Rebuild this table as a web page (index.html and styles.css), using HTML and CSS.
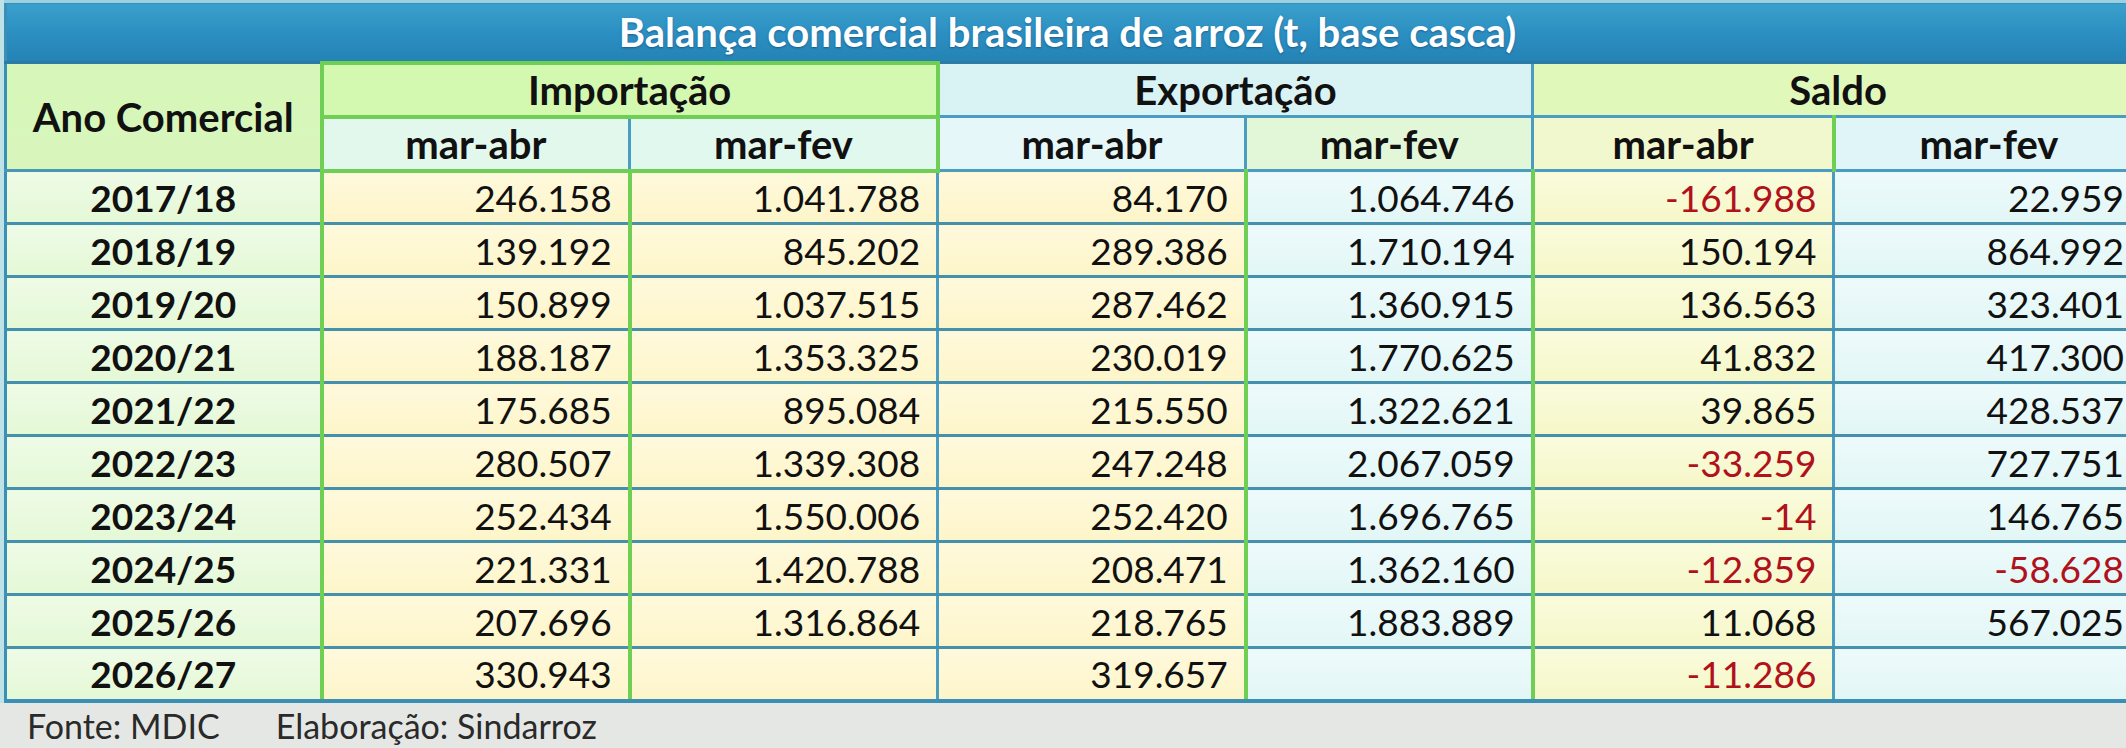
FILE: index.html
```html
<!DOCTYPE html>
<html lang="pt-BR">
<head>
<meta charset="utf-8">
<title>Balança comercial brasileira de arroz</title>
<link rel="stylesheet" href="styles.css">
</head>
<body>
<div class="frame">
<table class="grid">
  <colgroup>
    <col class="c-ano"><col class="c-n"><col class="c-n"><col class="c-n"><col class="c-n2"><col class="c-n3"><col class="c-n">
  </colgroup>
  <thead>
    <tr class="title-row"><th colspan="7" class="title">Balança comercial brasileira de arroz (t, base casca)</th></tr>
    <tr class="h1">
      <th rowspan="2" class="h-ano">Ano Comercial</th>
      <th colspan="2" class="h-imp">Importação</th>
      <th colspan="2" class="h-exp">Exportação</th>
      <th colspan="2" class="h-sal">Saldo</th>
    </tr>
    <tr class="h2">
      <th class="s-imp1">mar-abr</th>
      <th class="s-imp2">mar-fev</th>
      <th class="s-exp1">mar-abr</th>
      <th class="s-exp2">mar-fev</th>
      <th class="s-sal1">mar-abr</th>
      <th class="s-sal2">mar-fev</th>
    </tr>
  </thead>
  <tbody>
    <tr><td class="ano">2017/18</td><td class="y b-g">246.158</td><td class="y b-b">1.041.788</td><td class="y b-g">84.170</td><td class="c b-g">1.064.746</td><td class="l b-b neg">-161.988</td><td class="c b-g">22.959</td></tr>
    <tr><td class="ano">2018/19</td><td class="y b-g">139.192</td><td class="y b-b">845.202</td><td class="y b-g">289.386</td><td class="c b-g">1.710.194</td><td class="l b-b">150.194</td><td class="c b-g">864.992</td></tr>
    <tr><td class="ano">2019/20</td><td class="y b-g">150.899</td><td class="y b-b">1.037.515</td><td class="y b-g">287.462</td><td class="c b-g">1.360.915</td><td class="l b-b">136.563</td><td class="c b-g">323.401</td></tr>
    <tr><td class="ano">2020/21</td><td class="y b-g">188.187</td><td class="y b-b">1.353.325</td><td class="y b-g">230.019</td><td class="c b-g">1.770.625</td><td class="l b-b">41.832</td><td class="c b-g">417.300</td></tr>
    <tr><td class="ano">2021/22</td><td class="y b-g">175.685</td><td class="y b-b">895.084</td><td class="y b-g">215.550</td><td class="c b-g">1.322.621</td><td class="l b-b">39.865</td><td class="c b-g">428.537</td></tr>
    <tr><td class="ano">2022/23</td><td class="y b-g">280.507</td><td class="y b-b">1.339.308</td><td class="y b-g">247.248</td><td class="c b-g">2.067.059</td><td class="l b-b neg">-33.259</td><td class="c b-g">727.751</td></tr>
    <tr><td class="ano">2023/24</td><td class="y b-g">252.434</td><td class="y b-b">1.550.006</td><td class="y b-g">252.420</td><td class="c b-g">1.696.765</td><td class="l b-b neg">-14</td><td class="c b-g">146.765</td></tr>
    <tr><td class="ano">2024/25</td><td class="y b-g">221.331</td><td class="y b-b">1.420.788</td><td class="y b-g">208.471</td><td class="c b-g">1.362.160</td><td class="l b-b neg">-12.859</td><td class="c b-g neg">-58.628</td></tr>
    <tr><td class="ano">2025/26</td><td class="y b-g">207.696</td><td class="y b-b">1.316.864</td><td class="y b-g">218.765</td><td class="c b-g">1.883.889</td><td class="l b-b">11.068</td><td class="c b-g">567.025</td></tr>
    <tr><td class="ano">2026/27</td><td class="y b-g">330.943</td><td class="y b-b"></td><td class="y b-g">319.657</td><td class="c b-g"></td><td class="l b-b neg">-11.286</td><td class="c b-g"></td></tr>
  </tbody>
</table>
<div class="footer"><span class="src">Fonte: MDIC</span><span class="src">Elaboração: Sindarroz</span></div>
</div>
</body>
</html>
```

FILE: styles.css
```css
html, body {
  margin: 0;
  padding: 0;
  width: 2126px;
  height: 748px;
  overflow: hidden;
  background: #e5e7e5;
  font-family: Lato, "Open Sans", "Liberation Sans", sans-serif;
}

.frame {
  width: 2160px;
  background: linear-gradient(to right, #bfe2e6 0, #bfe2e6 4px, transparent 4px);
}

.grid {
  border-collapse: collapse;
  table-layout: fixed;
  width: 2140px;
  margin-left: 4px;
  color: #111;
}

.c-ano { width: 316px; }
.c-n { width: 308px; }
.c-n2 { width: 287px; }
.c-n3 { width: 301px; }

th, td {
  padding: 0;
  overflow: hidden;
  white-space: nowrap;
}

.title-row { height: 61px; }
.title {
  background: linear-gradient(#3aa0cc, #2a8cbf 60%, #2583b5);
  border-top: 3px solid #9fd0de;
  border-left: 3px solid #3a90b4;
  border-bottom: 3px solid #2a7ca6;
  color: #fff;
  font-size: 40px;
  font-weight: 700;
  text-align: center;
  padding-right: 14px;
  text-shadow: 0 1px 2px rgba(0, 40, 80, 0.45);
}

.h1 { height: 54px; }
.h2 { height: 54px; }

thead th {
  font-size: 40px;
  font-weight: 700;
  text-align: center;
  color: #111;
}

.h-ano {
  background: linear-gradient(#d6f7b8, #d8f6bc);
  border-left: 3px solid #3a90b4;
  border-right: 4px solid #6fcf55;
  border-bottom: 3px solid #4a96b4;
}
.h-imp {
  background: #d3f9b0;
  border: 4px solid #6fcf55;
}
.h-exp {
  background: #d9f3f5;
  border-right: 3px solid #4a9cc0;
  border-bottom: 3px solid #4a9cc0;
}
.h-sal {
  background: #e1f8bb;
  border-bottom: 3px solid #4a9cc0;
}

.s-imp1 { background: #e2f8ec; border-left: 4px solid #6fcf55; border-right: 3px solid #4a9cc0; border-bottom: 4px solid #6fcf55; }
.s-imp2 { background: #e0f8ee; border-right: 4px solid #6fcf55; border-bottom: 4px solid #6fcf55; }
.s-exp1 { background: #e6f7f9; border-right: 3px solid #4a9cc0; border-bottom: 3px solid #4a9cc0; }
.s-exp2 { background: #e2f6d8; border-right: 3px solid #4a9cc0; border-bottom: 3px solid #4a9cc0; }
.s-sal1 { background: #f1f8cd; border-right: 4px solid #6fcf55; border-bottom: 3px solid #4a9cc0; }
.s-sal2 { background: #e0f5f7; border-bottom: 3px solid #4a9cc0; }

tbody tr { height: 53px; }

tbody td {
  font-size: 37px;
  text-align: right;
  padding-right: 16px;
  border-bottom: 3px solid #4591ad;
}
tbody tr:last-child td { border-bottom: 4px solid #3a8fb6; }

td.ano {
  text-align: center;
  padding-right: 0;
  font-weight: 700;
  background: linear-gradient(#eefbe6, #e4f8d6);
  border-left: 3px solid #3a90b4;
  border-right: 4px solid #6fcf55;
}

td.y { background: linear-gradient(#fef9dc, #fdf5c9); }
td.c { background: linear-gradient(#edfafb, #e2f6f6); }
td.l { background: linear-gradient(#fafbdc, #f5f7c8); }

td.b-g { border-right: 4px solid #6fcf55; }
td.b-b { border-right: 3px solid #4a9cc0; }

td.neg { color: #b0111b; }

.footer {
  height: 45px;
  display: flex;
  align-items: flex-end;
  gap: 56px;
  padding-left: 27px;
  background: #e5e7e5;
  font-size: 34px;
  color: #2a2a2a;
  line-height: 44px;
}
```
